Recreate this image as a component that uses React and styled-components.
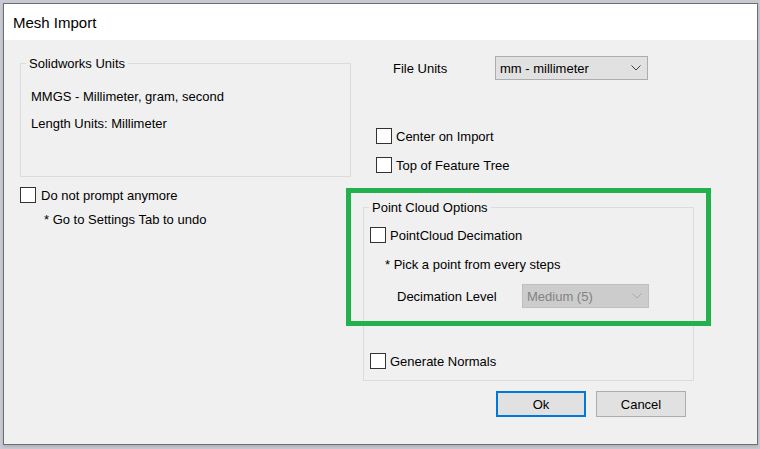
import React from "react";
import styled, { createGlobalStyle } from "styled-components";

const GlobalStyle = createGlobalStyle`
  html, body {
    margin: 0;
    padding: 0;
    background: #c7cad3;
  }
  body {
    width: 760px;
    height: 449px;
    overflow: hidden;
    font-family: "Liberation Sans", Arial, sans-serif;
    font-size: 13px;
    color: #000;
  }
`;

const Window = styled.div`
  box-sizing: border-box;
  margin: 3px 0 0 3px;
  width: 755px;
  height: 442px;
  border: 1px solid #6d6d6d;
  background: #f0f0f0;
  display: flex;
  flex-direction: column;
  box-shadow: 0 2px 3px rgba(0, 0, 0, 0.12);
`;

const TitleBar = styled.div`
  height: 36px;
  background: #ffffff;
  display: flex;
  align-items: center;
  padding-left: 9px;
  font-size: 15px;
  color: #000;
`;

const Body = styled.div`
  flex: 1;
  display: grid;
  grid-template-columns: 331px 331px;
  column-gap: 12px;
  align-items: start;
  padding: 16px 0 0 16px;
`;

const Column = styled.div`
  position: relative;
  display: flex;
  flex-direction: column;
`;

const GroupBox = styled.fieldset`
  margin: ${(p) => p.$mt || 0}px 0 0 0;
  padding: ${(p) => p.$pt}px 0 ${(p) => p.$pb}px ${(p) => p.$inset}px;
  border: 1px solid #dcdcdc;
  min-width: 0;
  display: flex;
  flex-direction: column;
`;

const Legend = styled.legend`
  padding: 0 3px;
  margin-left: ${(p) => 5 - p.$inset}px;
  line-height: 15px;
  font-size: 13px;
`;

const Text = styled.div`
  line-height: 15px;
  margin-top: ${(p) => p.$mt || 0}px;
  padding-left: ${(p) => p.$indent || 0}px;
  white-space: nowrap;
`;

const CheckRow = styled.label`
  display: flex;
  align-items: center;
  gap: ${(p) => p.$gap || 4}px;
  margin-top: ${(p) => p.$mt || 0}px;
  padding-left: ${(p) => p.$indent || 0}px;
  height: 16px;
  white-space: nowrap;
  line-height: 15px;
`;

const Box = styled.span`
  box-sizing: border-box;
  width: 16px;
  height: 16px;
  border: 1px solid #333333;
  background: #ffffff;
  flex: none;
`;

const FieldRow = styled.div`
  display: flex;
  align-items: center;
  margin-top: ${(p) => p.$mt || 0}px;
  padding-left: ${(p) => p.$indent || 0}px;
`;

const FieldLabel = styled.span`
  width: ${(p) => p.$w}px;
  flex: none;
  line-height: 15px;
  white-space: nowrap;
`;

const Select = styled.div`
  box-sizing: border-box;
  width: ${(p) => p.$w}px;
  height: 24px;
  display: flex;
  align-items: center;
  justify-content: space-between;
  padding: 0 6px 0 4px;
  border: 1px solid ${(p) => (p.$disabled ? "#bfbfbf" : "#adadad")};
  background: ${(p) => (p.$disabled ? "#cccccc" : "#e1e1e1")};
  color: ${(p) => (p.$disabled ? "#838383" : "#000")};
  white-space: nowrap;
`;

const Buttons = styled.div`
  display: flex;
  justify-content: flex-end;
  gap: 10px;
  margin-top: 10px;
  padding-right: 8px;
`;

const Button = styled.div`
  box-sizing: border-box;
  width: 90px;
  height: 26px;
  display: flex;
  align-items: center;
  justify-content: center;
  background: #e1e1e1;
  border: ${(p) => (p.$default ? "2px solid #0078d7" : "1px solid #adadad")};
`;

const Highlight = styled.div`
  position: absolute;
  left: -17px;
  top: 132px;
  width: 365px;
  height: 138px;
  box-sizing: border-box;
  border: 5px solid #22b14c;
  pointer-events: none;
`;

const Chevron = ({ color }) => (
  <svg width="10" height="6" viewBox="0 0 10 6">
    <path d="M0.5 0.5 L5 5 L9.5 0.5" fill="none" stroke={color} strokeWidth="1" />
  </svg>
);

const Check = ({ children, ...rest }) => (
  <CheckRow {...rest}>
    <Box />
    <span>{children}</span>
  </CheckRow>
);

export default function App() {
  return (
    <>
      <GlobalStyle />
      <Window>
        <TitleBar>Mesh Import</TitleBar>
        <Body>
          <Column>
            <GroupBox $inset={9} $pt={18} $pb={45}>
              <Legend $inset={9}>Solidworks Units</Legend>
              <Text $indent={1}>MMGS - Millimeter, gram, second</Text>
              <Text $indent={1} $mt={12}>Length Units: Millimeter</Text>
            </GroupBox>
            <Check $mt={10} $gap={5}>Do not prompt anymore</Check>
            <Text $mt={9} $indent={24}>* Go to Settings Tab to undo</Text>
          </Column>

          <Column>
            <FieldRow $indent={30}>
              <FieldLabel $w={102}>File Units</FieldLabel>
              <Select $w={153}>
                <span>mm - millimeter</span>
                <Chevron color="#404040" />
              </Select>
            </FieldRow>
            <Check $mt={48} $indent={13}>Center on Import</Check>
            <Check $mt={13} $indent={13}>Top of Feature Tree</Check>

            <GroupBox $mt={27} $inset={6} $pt={12} $pb={11}>
              <Legend $inset={6}>Point Cloud Options</Legend>
              <Check>PointCloud Decimation</Check>
              <Text $mt={14} $indent={15}>* Pick a point from every steps</Text>
              <FieldRow $mt={12} $indent={27}>
                <FieldLabel $w={125}>Decimation Level</FieldLabel>
                <Select $w={127} $disabled>
                  <span>Medium (5)</span>
                  <Chevron color="#a8a8a8" />
                </Select>
              </FieldRow>
              <Check $mt={45}>Generate Normals</Check>
            </GroupBox>

            <Buttons>
              <Button $default>Ok</Button>
              <Button>Cancel</Button>
            </Buttons>

            <Highlight />
          </Column>
        </Body>
      </Window>
    </>
  );
}
